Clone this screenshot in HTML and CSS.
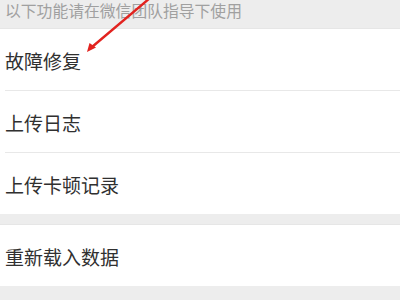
FILE: index.html
```html
<!DOCTYPE html>
<html>
<head>
<meta charset="utf-8">
<link rel="stylesheet" href="styles.css">
</head>
<body>
<div class="page">
  <div class="header">以下功能请在微信团队指导下使用</div>
  <div class="group">
    <div class="row"><span class="label">故障修复</span></div>
    <div class="row"><span class="label">上传日志</span></div>
    <div class="row"><span class="label">上传卡顿记录</span></div>
  </div>
  <div class="gap"></div>
  <div class="group">
    <div class="row"><span class="label">重新载入数据</span></div>
  </div>
  <svg class="arrow" width="400" height="300" viewBox="0 0 400 300">
    <line x1="150" y1="-2" x2="92" y2="47" stroke="#e2231f" stroke-width="2.4" stroke-linecap="round"/>
    <polygon points="87,52 89.5,43 96,47.5" fill="#e2231f"/>
  </svg>
</div>
</body>
</html>
```
FILE: styles.css
```css
html, body {
  margin: 0;
  padding: 0;
  background: #ededed;
}
.page {
  position: relative;
  width: 400px;
  height: 300px;
  overflow: hidden;
  background: #ededed;
  font-family: "Noto Sans CJK SC", "Noto Sans", sans-serif;
}
.header {
  height: 28px;
  padding-left: 5px;
  font-size: 15.8px;
  line-height: 21px;
  color: #a0a0a0;
  box-sizing: border-box;
  white-space: nowrap;
}
.group {
  background: #ffffff;
  border-top: 1px solid #e6e6e6;
}
.row {
  height: 61px;
  display: flex;
  align-items: center;
  margin-left: 5px;
  border-bottom: 1px solid #e8e8e8;
}
.row:last-child {
  border-bottom: none;
}
.label {
  font-size: 19px;
  color: #303030;
  position: relative;
  top: 1px;
}
.gap {
  height: 10px;
  background: #ededed;
}
.arrow {
  position: absolute;
  left: 0;
  top: 0;
}
```
